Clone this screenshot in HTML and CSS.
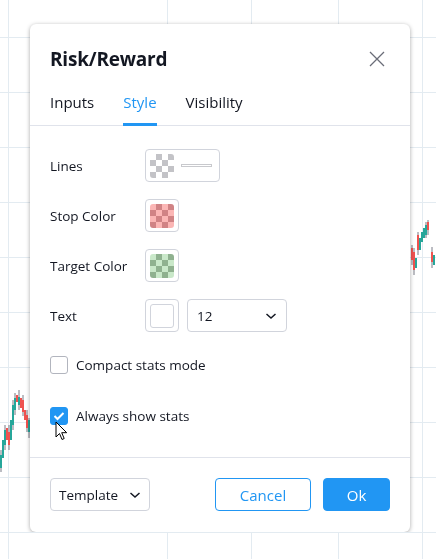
FILE: index.html
```html
<!DOCTYPE html>
<html lang="en">
<head>
  <meta charset="UTF-8">
  <title>Risk/Reward</title>
  <link rel="stylesheet" href="styles.css">
</head>
<body>
  <svg class="chart" width="436" height="559" viewBox="0 0 436 559">
    <g stroke="#e3ebf1" stroke-width="1">
      <line x1="8.5" y1="0" x2="8.5" y2="559"/>
      <line x1="167.5" y1="0" x2="167.5" y2="559"/>
      <line x1="251.5" y1="0" x2="251.5" y2="559"/>
      <line x1="338.5" y1="0" x2="338.5" y2="559"/>
      <line x1="422.5" y1="0" x2="422.5" y2="559"/>
      <line x1="0" y1="37.5" x2="436" y2="37.5"/>
      <line x1="0" y1="92.5" x2="436" y2="92.5"/>
      <line x1="0" y1="147.5" x2="436" y2="147.5"/>
      <line x1="0" y1="202.5" x2="436" y2="202.5"/>
      <line x1="0" y1="257.5" x2="436" y2="257.5"/>
      <line x1="0" y1="312.5" x2="436" y2="312.5"/>
      <line x1="0" y1="367.5" x2="436" y2="367.5"/>
      <line x1="0" y1="422.5" x2="436" y2="422.5"/>
      <line x1="0" y1="477.5" x2="436" y2="477.5"/>
      <line x1="0" y1="532.5" x2="436" y2="532.5"/>
    </g>
    <g stroke="#787b86" stroke-width="1">
      <line x1="1" y1="450" x2="1" y2="472"/>
      <line x1="5" y1="425" x2="5" y2="450"/>
      <line x1="9" y1="425" x2="9" y2="450"/>
      <line x1="13" y1="400" x2="13" y2="430"/>
      <line x1="15" y1="393" x2="15" y2="415"/>
      <line x1="19" y1="390" x2="19" y2="410"/>
      <line x1="23" y1="395" x2="23" y2="416"/>
      <line x1="27" y1="410" x2="27" y2="432"/>
      <line x1="29" y1="418" x2="29" y2="438"/>
      <line x1="412" y1="245" x2="412" y2="265"/>
      <line x1="414" y1="248" x2="414" y2="275"/>
      <line x1="418" y1="232" x2="418" y2="255"/>
      <line x1="426" y1="222" x2="426" y2="238"/>
      <line x1="428" y1="220" x2="428" y2="235"/>
      <line x1="432" y1="247" x2="432" y2="268"/>
    </g>
    <g fill="#26a69a">
      <rect x="0" y="455" width="2" height="13"/>
      <rect x="2" y="440" width="2" height="18"/>
      <rect x="4" y="430" width="2" height="15"/>
      <rect x="10" y="420" width="2" height="20"/>
      <rect x="12" y="405" width="2" height="20"/>
      <rect x="14" y="398" width="2" height="12"/>
      <rect x="18" y="397" width="2" height="8"/>
      <rect x="28" y="420" width="2" height="12"/>
      <rect x="415" y="258" width="2" height="10"/>
      <rect x="419" y="238" width="2" height="12"/>
      <rect x="421" y="232" width="2" height="10"/>
      <rect x="423" y="228" width="2" height="10"/>
      <rect x="425" y="225" width="2" height="10"/>
      <rect x="433" y="255" width="2" height="10"/>
    </g>
    <g fill="#ef5350">
      <rect x="6" y="428" width="2" height="12"/>
      <rect x="8" y="432" width="2" height="13"/>
      <rect x="16" y="395" width="2" height="7"/>
      <rect x="20" y="398" width="2" height="10"/>
      <rect x="22" y="400" width="2" height="12"/>
      <rect x="24" y="410" width="2" height="10"/>
      <rect x="26" y="415" width="2" height="13"/>
      <rect x="411" y="248" width="2" height="12"/>
      <rect x="413" y="252" width="2" height="18"/>
      <rect x="417" y="235" width="2" height="15"/>
      <rect x="427" y="222" width="2" height="8"/>
      <rect x="431" y="252" width="2" height="10"/>
    </g>
  </svg>

  <div class="dialog">
    <div class="dialog-head">
      <h2 class="dialog-title">Risk/Reward</h2>
      <svg class="close" width="18" height="18" viewBox="0 0 18 18">
        <path d="M2 2l14 14M16 2L2 16" stroke="#6a6d78" stroke-width="1.3" fill="none"/>
      </svg>
    </div>

    <div class="tabs">
      <span class="tab">Inputs</span>
      <span class="tab active">Style</span>
      <span class="tab">Visibility</span>
    </div>

    <div class="dialog-body">
      <div class="row">
        <span class="row-label">Lines</span>
        <div class="control control-wide">
          <span class="swatch swatch-gray"></span>
          <span class="line-sample"></span>
        </div>
      </div>
      <div class="row">
        <span class="row-label">Stop Color</span>
        <div class="control">
          <span class="swatch swatch-red"></span>
        </div>
      </div>
      <div class="row">
        <span class="row-label">Target Color</span>
        <div class="control">
          <span class="swatch swatch-green"></span>
        </div>
      </div>
      <div class="row">
        <span class="row-label">Text</span>
        <div class="control">
          <span class="swatch swatch-white"></span>
        </div>
        <div class="select select-size">
          <span>12</span>
          <svg width="12" height="8" viewBox="0 0 12 8"><path d="M1.5 2l4.5 4 4.5-4" stroke="#131722" stroke-width="1.5" fill="none"/></svg>
        </div>
      </div>

      <label class="check-row">
        <span class="checkbox"></span>
        <span>Compact stats mode</span>
      </label>
      <label class="check-row">
        <span class="checkbox checked">
          <svg width="12" height="10" viewBox="0 0 12 10"><path d="M1.5 5l3 3 6-6" stroke="#fff" stroke-width="2" fill="none"/></svg>
        </span>
        <span>Always show stats</span>
        <svg class="pointer" width="14" height="20" viewBox="0 0 14 20">
          <path d="M1 1v15l3.5-3.5 2.5 6 2.2-1-2.5-5.8h5z" fill="#fff" stroke="#000" stroke-width="1" stroke-linejoin="round"/>
        </svg>
      </label>
    </div>

    <div class="dialog-foot">
      <div class="select select-template">
        <span>Template</span>
        <svg width="12" height="8" viewBox="0 0 12 8"><path d="M1.5 2l4.5 4 4.5-4" stroke="#131722" stroke-width="1.5" fill="none"/></svg>
      </div>
      <div class="buttons">
        <button class="btn btn-cancel">Cancel</button>
        <button class="btn btn-ok">Ok</button>
      </div>
    </div>
  </div>
</body>
</html>
```

FILE: styles.css
```css
body {
  margin: 0;
  padding: 24px 0 0 30px;
  background-color: #fff;
  font-family: "Open Sans", "Noto Sans", sans-serif;
  color: #131722;
}
.chart {
  position: fixed;
  left: 0;
  top: 0;
  z-index: 0;
}
.dialog {
  position: relative;
  z-index: 1;
  width: 380px;
  height: 508px;
  box-sizing: border-box;
  background-color: #fff;
  border-radius: 6px;
  box-shadow: 0 1px 4px rgba(0, 0, 0, 0.35);
  display: flex;
  flex-direction: column;
}
.dialog-head {
  display: flex;
  align-items: center;
  justify-content: space-between;
  padding: 22px 24px 0 20px;
  height: 26px;
}
.dialog-title {
  margin: 0;
  font-size: 19px;
  font-weight: 700;
  letter-spacing: -0.2px;
}
.close {
  display: block;
}
.tabs {
  display: flex;
  gap: 29px;
  padding: 0 20px;
  margin-top: 14px;
  border-bottom: 1px solid #e0e3eb;
}
.tab {
  font-size: 15px;
  line-height: 22px;
  padding: 5px 0 10px;
  border-bottom: 3px solid transparent;
  margin-bottom: -1px;
}
.tab.active {
  color: #2196f3;
  border-bottom-color: #2196f3;
}
.dialog-body {
  padding: 23px 20px 0;
  flex: 1;
}
.row {
  display: flex;
  align-items: center;
  height: 33px;
  margin-bottom: 17px;
  font-size: 13.5px;
}
.row-label {
  width: 95px;
}
.control {
  height: 33px;
  box-sizing: border-box;
  border: 1px solid #d1d4dc;
  border-radius: 4px;
  padding: 0 4px;
  display: flex;
  align-items: center;
  gap: 7px;
}
.control-wide {
  width: 75px;
}
.swatch {
  display: block;
  width: 24px;
  height: 24px;
  border-radius: 3px;
}
.swatch-gray {
  background: repeating-conic-gradient(#c3c3c7 0 25%, #fff 0 50%) 0 0 / 12px 12px;
}
.swatch-red {
  background: repeating-conic-gradient(#d08385 0 25%, #fbb6b5 0 50%) 0 0 / 12px 12px;
}
.swatch-green {
  background: repeating-conic-gradient(#8fb18f 0 25%, #c9e8c9 0 50%) 0 0 / 12px 12px;
}
.swatch-white {
  box-sizing: border-box;
  border: 1px solid #d1d4dc;
  background-color: #fff;
}
.line-sample {
  display: block;
  width: 29px;
  height: 1px;
  border: 1px solid #c8c9cd;
}
.select {
  height: 33px;
  box-sizing: border-box;
  border: 1px solid #d1d4dc;
  border-radius: 4px;
  display: flex;
  align-items: center;
  justify-content: space-between;
  padding: 0 9px 0 9px;
  font-size: 13.5px;
}
.select-size {
  width: 100px;
  margin-left: 8px;
}
.check-row {
  position: relative;
  display: flex;
  align-items: center;
  gap: 8px;
  height: 18px;
  margin-bottom: 32px;
  font-size: 13.5px;
}
.check-row:first-of-type {
  margin-top: 24px;
}
.check-row + .check-row {
  margin-top: 33px;
}
.checkbox {
  width: 18px;
  height: 18px;
  box-sizing: border-box;
  border: 1px solid #b2b5be;
  border-radius: 3px;
  display: flex;
  align-items: center;
  justify-content: center;
}
.checkbox.checked {
  background-color: #2196f3;
  border-color: #2196f3;
}
.pointer {
  position: absolute;
  left: 5px;
  top: 14px;
}
.dialog-foot {
  border-top: 1px solid #e0e3eb;
  padding: 20px 20px 21px;
  display: flex;
  align-items: center;
  justify-content: space-between;
}
.select-template {
  width: 100px;
  padding: 0 8px;
}
.buttons {
  display: flex;
  gap: 12px;
}
.btn {
  height: 33px;
  box-sizing: border-box;
  border-radius: 4px;
  font-family: "Open Sans", "Noto Sans", sans-serif;
  font-size: 15px;
  border: 1px solid #2196f3;
}
.btn-cancel {
  width: 96px;
  background-color: #fff;
  color: #2196f3;
}
.btn-ok {
  width: 67px;
  background-color: #2196f3;
  color: #fff;
}
```
